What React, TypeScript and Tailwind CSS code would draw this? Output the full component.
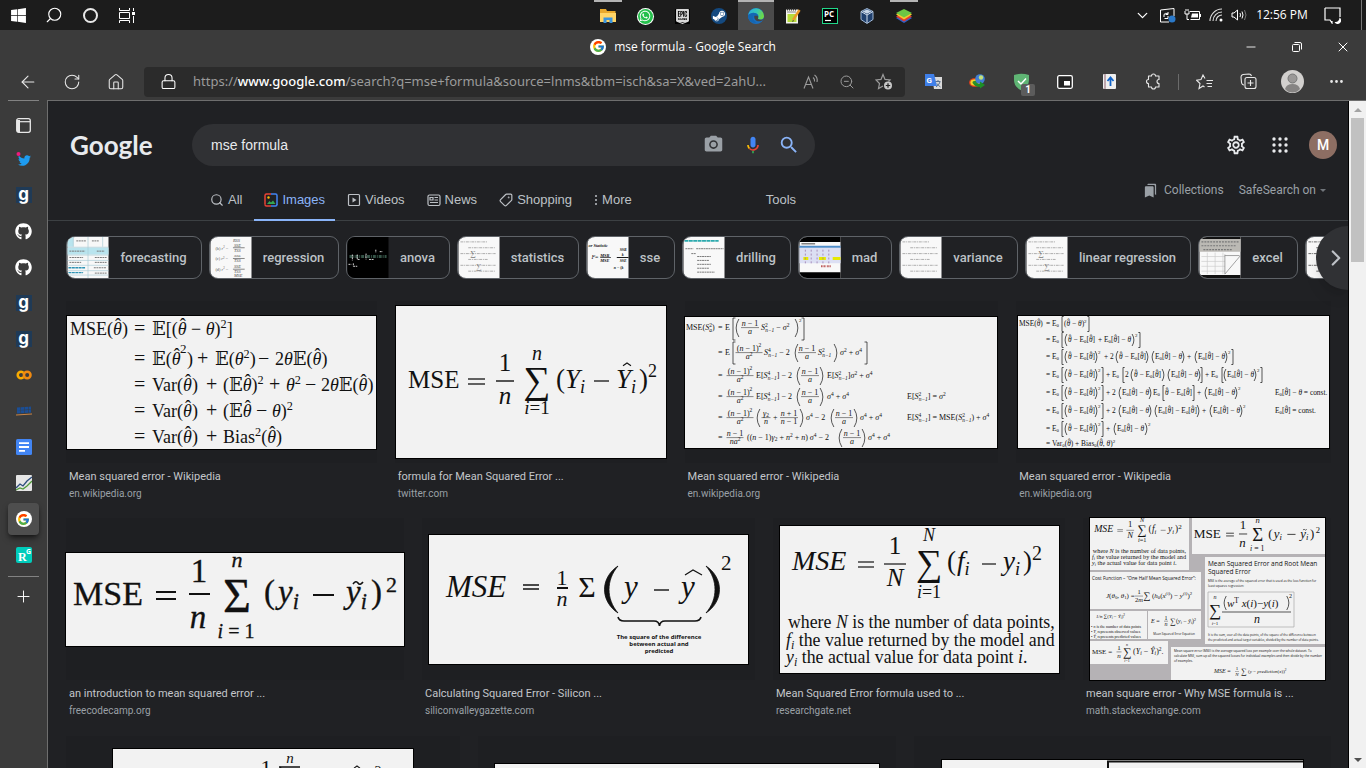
import React from "react";
import { ArrowLeft, RotateCw, House, Lock, ZoomOut, Plus, ChevronDown, ChevronRight, Search, Minus, X, Ellipsis, Tag } from "lucide-react";
import { FaWindows, FaWhatsapp, FaSteamSymbol, FaGithub, FaTwitter } from "react-icons/fa";
import { FcGoogle } from "react-icons/fc";
import { SiEpicgames } from "react-icons/si";
import { MdCameraAlt, MdOutlineSettings, MdSearch, MdBookmarks } from "react-icons/md";

/* ---------- formula drawing helpers ---------- */

const SERIF = '"Liberation Serif", "DejaVu Serif", serif';
const SANS = '"Open Sans", "Noto Sans", sans-serif';

type MathProps = { x: number; y: number; s: number; t: string; mid?: boolean; bold?: boolean; sans?: boolean; fill?: string };

/** Text with *italic*, ^{superscript}, _{subscript} and ~θ (theta with a hat) runs. */
function M({ x, y, s, t, mid, bold, sans, fill }: MathProps) {
  const parts = t.split(/(\*[^*]+\*|\^\{[^}]*\}|_\{[^}]*\}|~θ)/).filter(Boolean);
  let shift = 0;
  let advance = 0;
  return (
    <text x={x} y={y} fontSize={s} fill={fill ?? "#111"} textAnchor={mid ? "middle" : "start"} fontFamily={sans ? SANS : SERIF} fontWeight={bold ? 700 : 400} xmlSpace="preserve">
      {parts.map((p, i) => {
        const back = -shift;
        const dx = advance;
        shift = 0;
        advance = 0;
        if (p === "~θ") {
          shift = -s * 0.2;
          advance = s * 0.05;
          return (
            <React.Fragment key={i}>
              <tspan dx={dx} dy={back} fontStyle="italic">θ</tspan>
              <tspan dx={-s * 0.38} dy={shift}>ˆ</tspan>
            </React.Fragment>
          );
        }
        if (p[0] === "*") return <tspan key={i} dx={dx} dy={back} fontStyle="italic">{p.slice(1, -1)}</tspan>;
        if (p.startsWith("^{") || p.startsWith("_{")) {
          const stacked = p[0] === "_" && i > 0 && parts[i - 1].startsWith("^{");
          shift = p[0] === "^" ? -s * 0.4 : s * (stacked ? 0.3 : 0.18);
          return <tspan key={i} dx={stacked ? -s * 0.32 : dx} dy={back + shift} fontSize={s * 0.68} fontStyle={/[a-z]/.test(p) ? "italic" : "normal"}>{p.slice(2, -1)}</tspan>;
        }
        return <tspan key={i} dx={dx} dy={back}>{p}</tspan>;
      })}
    </text>
  );
}

function Frac({ x, y, s, n, d, w }: { x: number; y: number; s: number; n: string; d: string; w: number }) {
  const bar = y - s * 0.3;
  return (
    <>
      <M x={x} y={bar - s * 0.25} s={s} t={n} mid />
      <path d={`M${x - w / 2} ${bar}h${w}`} stroke="#111" strokeWidth={s * 0.06} />
      <M x={x} y={bar + s * 0.85} s={s} t={d} mid />
    </>
  );
}

function Bracket({ x, y, h, k }: { x: number; y: number; h: number; k: "(" | ")" | "[" | "]" }) {
  const w = k === "(" || k === "[" ? h * 0.16 : -h * 0.16;
  const t = y - h / 2;
  const d = k === "(" || k === ")"
    ? `M${x + w} ${t}Q${x - w * 0.9} ${y} ${x + w} ${t + h}`
    : `M${x + w * 0.7} ${t}H${x}v${h}h${w * 0.7}`;
  return <path d={d} fill="none" stroke="#111" strokeWidth={0.7} />;
}

function Rule({ x, y, w, t = 1 }: { x: number; y: number; w: number; t?: number }) {
  return <path d={`M${x} ${y}h${w}`} stroke="#111" strokeWidth={t} />;
}

function Hat({ x, y, w }: { x: number; y: number; w: number }) {
  return <path d={`M${x - w / 2} ${y + w * 0.35}L${x} ${y}L${x + w / 2} ${y + w * 0.35}`} fill="none" stroke="#111" strokeWidth={1.1} />;
}

/* ---------- result pictures ---------- */

function WikiBias() {
  const s = 18;
  return (
    <svg viewBox="0 0 309 133" className="w-[309px] max-w-full bg-[#f2f2f2] ring-1 ring-black" role="img" aria-label="Mean squared error decomposition">
      <M x={3} y={19} s={s} t="MSE(~θ)" />
      {[19, 49, 75, 101, 127].map((y) => <M key={y} x={67} y={y} s={20} t="=" />)}
      <M x={85} y={19} s={s} t="𝔼[(~θ − *θ*)^{2}]" />
      <M x={85} y={49} s={s} t="𝔼(~θ" /><M x={113} y={37} s={13} t="2" /><M x={120} y={49} s={s} t=")" />
      <M x={130} y={49} s={20} t="+" /><M x={148} y={49} s={s} t="𝔼(*θ*^{2})" /><M x={191} y={49} s={20} t="−" />
      <M x={208} y={49} s={s} t="2*θ*𝔼(~θ)" />
      {[75, 101, 127].map((y) => (
        <g key={y}><M x={85} y={y} s={s} t="Var(~θ)" /><M x={139} y={y} s={20} t="+" /></g>
      ))}
      <M x={156} y={75} s={s} t="(𝔼~θ)^{2}" /><M x={202} y={75} s={20} t="+" />
      <M x={219} y={75} s={s} t="*θ*^{2}" /><M x={238} y={75} s={20} t="−" /><M x={254} y={75} s={s} t="2*θ*𝔼(~θ)" />
      <M x={156} y={101} s={s} t="(𝔼~θ" /><M x={189} y={101} s={20} t="−" /><M x={205} y={101} s={s} t="*θ*)^{2}" />
      <M x={156} y={127} s={s} t="Bias^{2}(~θ)" />
    </svg>
  );
}

function TwitterFormula() {
  return (
    <svg viewBox="0 0 270 152" className="w-[270px] max-w-full bg-[#f2f2f2] ring-1 ring-black" role="img" aria-label="Formula for mean squared error">
      <M x={12} y={82} s={25} t="MSE" />
      <Rule x={72} y={73} w={17} t={1.3} /><Rule x={72} y={78} w={17} t={1.3} />
      <M x={109} y={65} s={25} t="1" mid /><Rule x={100} y={75} w={18} t={1.4} /><M x={109} y={98} s={25} t="*n*" mid />
      <M x={141} y={54} s={20} t="*n*" mid /><M x={141} y={87} s={38} t="∑" mid /><M x={141} y={108} s={19} t="*i*=1" mid />
      <M x={160} y={82} s={27} t="(*Y*_{i}" /><Rule x={198} y={75} w={15} t={1.3} />
      <M x={220} y={82} s={27} t="*Y*_{i}" /><Hat x={231} y={57} w={8} /><M x={243} y={82} s={27} t=")" /><M x={252} y={71} s={18} t="2" />
    </svg>
  );
}

const rowsVar = [13, 38, 61, 82, 103, 123];

function WikiVariance() {
  const s = 8;
  const nm = "*n* − 1";
  const tail = (x: number, y: number) => (
    <>
      <Bracket x={x} y={y - 2} h={18} k="(" /><Frac x={x + 13} y={y} s={s} n={nm} d="*a*" w={18} /><Bracket x={x + 26} y={y - 2} h={18} k=")" />
    </>
  );
  return (
    <svg viewBox="0 0 312 131" className="w-[312px] max-w-full bg-[#f2f2f2] ring-1 ring-black" role="img" aria-label="Mean squared error of the sample variance">
      <M x={1} y={13} s={s} t="MSE(*S*^{2}_{a})" />
      {rowsVar.map((y) => <M key={y} x={33} y={y} s={s} t="=" />)}
      <M x={40} y={13} s={s} t="E" /><Bracket x={48} y={12} h={22} k="[" /><Bracket x={51} y={11} h={18} k="(" />
      <Frac x={65} y={13} s={s} n={nm} d="*a*" w={18} /><M x={76} y={13} s={s} t="*S*^{2}_{n−1} − *σ*^{2}" />
      <Bracket x={113} y={11} h={18} k=")" /><M x={114} y={5} s={5} t="2" /><Bracket x={119} y={12} h={22} k="]" />
      <M x={40} y={38} s={s} t="E" /><Bracket x={48} y={36} h={22} k="[" /><Frac x={64} y={38} s={s} n="(*n* − 1)^{2}" d="*a*^{2}" w={27} />
      <M x={79} y={38} s={s} t="*S*^{4}_{n−1} − 2" /><Bracket x={110} y={36} h={18} k="(" /><Frac x={122} y={38} s={s} n={nm} d="*a*" w={18} />
      <M x={133} y={38} s={s} t="*S*^{2}_{n−1}" /><Bracket x={152} y={36} h={18} k=")" />
      <M x={155} y={38} s={s} t="*σ*^{2} + *σ*^{4}" /><Bracket x={182} y={36} h={22} k="]" />
      {[61, 82, 103].map((y) => <Frac key={y} x={55} y={y} s={s} n="(*n* − 1)^{2}" d="*a*^{2}" w={27} />)}
      {[61, 82].map((y) => (
        <g key={y}><M x={71} y={y} s={s} t="E[*S*^{4}_{n−1}] − 2" />{tail(112, y)}</g>
      ))}
      <M x={142} y={61} s={s} t="E[*S*^{2}_{n−1}]*σ*^{2} + *σ*^{4}" />
      <M x={142} y={82} s={s} t="*σ*^{4} + *σ*^{4}" />
      <M x={222} y={82} s={s} t="E[*S*^{2}_{n−1}] = *σ*^{2}" />
      <Bracket x={72} y={101} h={18} k="(" /><Frac x={81} y={103} s={s} n="*γ*_{2}" d="*n*" w={9} /><M x={88} y={103} s={s} t="+" />
      <Frac x={104} y={103} s={s} n="*n* + 1" d={nm} w={18} /><Bracket x={118} y={101} h={18} k=")" />
      <M x={121} y={103} s={s} t="*σ*^{4} − 2" />{tail(146, 103)}<M x={175} y={103} s={s} t="*σ*^{4} + *σ*^{4}" />
      <M x={222} y={103} s={s} t="E[*S*^{4}_{n−1}] = MSE(*S*^{2}_{n−1}) + *σ*^{4}" />
      <Frac x={50} y={123} s={s} n={nm} d="*na*^{2}" w={17} />
      <M x={62} y={123} s={s} t="((*n* − 1)*γ*_{2} + *n*^{2} + *n*) *σ*^{4} − 2" />{tail(154, 123)}<M x={183} y={123} s={s} t="*σ*^{4} + *σ*^{4}" />
    </svg>
  );
}

const E = "E_{θ}[~θ]";

function WikiProof() {
  const s = 7.4;
  const B = (x: number, y: number, k: "(" | ")" | "[" | "]") => <Bracket x={x} y={y - 2} h={k === "[" || k === "]" ? 15 : 12} k={k} />;
  return (
    <svg viewBox="0 0 311 132" className="w-[311px] max-w-full bg-[#f2f2f2] ring-1 ring-black" role="img" aria-label="Proof of the bias variance relationship">
      <M x={1} y={10} s={s} t="MSE(~θ)" />
      {[10, 26, 43, 61, 79, 97, 115, 130].map((y) => <M key={y} x={28} y={y} s={s} t="=" />)}
      {[10, 26, 43, 61, 79, 97, 115].map((y) => <g key={y}><M x={34} y={y} s={s} t="E_{θ}" />{B(44, y, "[")}</g>)}
      <M x={46} y={10} s={s} t="(~θ − *θ*)^{2}" />{B(71, 10, "]")}
      {[26, 43, 61, 79, 97, 115].map((y) => <g key={y}>{B(47, y, "(")}<M x={50} y={y} s={s} t={`~θ − ${E}`} /></g>)}
      <M x={80} y={26} s={s} t={`+ ${E} − *θ*`} />{B(116, 26, ")")}<M x={117} y={21} s={5} t="2" />{B(122, 26, "]")}
      {[43, 61, 79, 97, 115].map((y) => <g key={y}>{B(79, y, ")")}<M x={80} y={y - 5} s={5} t="2" /></g>)}
      {[61, 79, 97, 115].map((y) => <g key={y}>{B(85, y, "]")}</g>)}
      <M x={86} y={43} s={s} t="+ 2" />{B(98, 43, "(")}<M x={101} y={43} s={s} t={`~θ − ${E}`} />{B(130, 43, ")")}
      {B(134, 43, "(")}<M x={137} y={43} s={s} t={`${E} − *θ*`} />{B(166, 43, ")")}<M x={169} y={43} s={s} t="+" />
      {B(177, 43, "(")}<M x={180} y={43} s={s} t={`${E} − *θ*`} />{B(209, 43, ")")}<M x={210} y={38} s={5} t="2" />{B(215, 43, "]")}
      <M x={88} y={61} s={s} t="+ E_{θ}" />{B(105, 61, "[")}<M x={107} y={61} s={s} t="2" />{B(113, 61, "(")}<M x={116} y={61} s={s} t={`~θ − ${E}`} />{B(146, 61, ")")}
      {B(150, 61, "(")}<M x={153} y={61} s={s} t={`${E} − *θ*`} />{B(182, 61, ")")}{B(184, 61, "]")}<M x={187} y={61} s={s} t="+ E_{θ}" />
      {B(204, 61, "[")}{B(206, 61, "(")}<M x={209} y={61} s={s} t={`${E} − *θ*`} />{B(238, 61, ")")}<M x={239} y={56} s={5} t="2" />{B(244, 61, "]")}
      <M x={88} y={79} s={s} t="+ 2" />{B(101, 79, "(")}<M x={104} y={79} s={s} t={`${E} − *θ*`} />{B(133, 79, ")")}<M x={135} y={79} s={s} t="E_{θ}" />
      {B(145, 79, "[")}<M x={147} y={79} s={s} t={`~θ − ${E}`} />{B(176, 79, "]")}<M x={179} y={79} s={s} t="+" />{B(187, 79, "(")}<M x={190} y={79} s={s} t={`${E} − *θ*`} />{B(219, 79, ")")}<M x={220} y={74} s={5} t="2" />
      <M x={88} y={97} s={s} t="+ 2" />{B(101, 97, "(")}<M x={104} y={97} s={s} t={`${E} − *θ*`} />{B(133, 97, ")")}
      {B(137, 97, "(")}<M x={140} y={97} s={s} t={`${E} − ${E}`} />{B(181, 97, ")")}<M x={184} y={97} s={s} t="+" />{B(192, 97, "(")}<M x={195} y={97} s={s} t={`${E} − *θ*`} />{B(224, 97, ")")}<M x={225} y={92} s={5} t="2" />
      <M x={88} y={115} s={s} t="+" />{B(96, 115, "(")}<M x={99} y={115} s={s} t={`${E} − *θ*`} />{B(129, 115, ")")}<M x={130} y={110} s={5} t="2" />
      <M x={34} y={130} s={s} t="Var_{θ}(~θ) + Bias_{θ}(~θ, *θ*)^{2}" />
      <M x={257} y={79} s={s} t={`${E} − *θ* = const.`} />
      <M x={257} y={97} s={s} t={`${E} = const.`} />
    </svg>
  );
}

function MseTilde() {
  return (
    <>
      <M x={7} y={52} s={34} t="MSE" />
      <Rule x={90} y={39} w={20} t={2} /><Rule x={90} y={46} w={20} t={2} />
      <M x={133} y={29} s={33} t="1" mid /><Rule x={123} y={41} w={21} t={2} /><M x={132} y={75} s={33} t="*n*" mid />
      <M x={171} y={14} s={22} t="*n*" mid /><M x={171} y={59} s={48} t="Σ" mid /><M x={170} y={85} s={20} t="*i* = 1" mid />
      <M x={198} y={50} s={33} t="(" /><M x={212} y={50} s={33} t="*y*_{i}" /><Rule x={247} y={42} w={21} t={2} />
      <M x={280} y={50} s={33} t="*y*_{i}" />
      <path d="M287 31q3-4 5-1t5-1" fill="none" stroke="#111" strokeWidth="1.6" />
      <M x={305} y={50} s={33} t=")" /><M x={320} y={39} s={22} t="2" />
    </>
  );
}

function FreeCodeCamp() {
  return (
    <svg viewBox="0 0 338 93" className="w-[338px] max-w-full bg-[#f2f2f2] ring-1 ring-black" role="img" aria-label="MSE formula with y tilde">
      <g stroke="#111" strokeWidth={0.3}><MseTilde /></g>
    </svg>
  );
}

function SiliconValley() {
  return (
    <svg viewBox="0 0 319 129" className="w-[319px] max-w-full bg-[#f2f2f2] ring-1 ring-black" role="img" aria-label="Squared error explained">
      <M x={17} y={62} s={31} t="*MSE*" />
      <Rule x={94} y={50} w={16} t={1.5} /><Rule x={94} y={54} w={16} t={1.5} />
      <M x={133} y={50} s={22} t="1" mid /><Rule x={128} y={53} w={11} t={2} /><M x={133} y={71} s={22} t="*n*" mid />
      <M x={158} y={62} s={30} t="Σ" mid />
      <path d="M189 31C171 43 171 66 189 78C177 64 177 45 189 31ZM277 31C295 43 295 66 277 78C289 64 289 45 277 31Z" fill="#111" stroke="#111" strokeWidth="0.8" />
      <M x={195} y={62} s={31} t="*y*" /><Rule x={225} y={55} w={15} t={1.4} /><M x={252} y={62} s={31} t="*y*" />
      <path d="M256 40L264 35L273 40" fill="none" stroke="#111" strokeWidth="1.2" />
      <M x={292} y={35} s={21} t="2" />
      <path d="M189 82q1 4 6 4h30q5 0 5.500 5q.5-5 5.500-5h30q5 0 6-4" fill="none" stroke="#111" strokeWidth="1.600" />
      <M x={230} y={104} s={6} t="The square of the difference" mid bold sans />
      <M x={230} y={111} s={6} t="between actual and" mid bold sans />
      <M x={230} y={118} s={6} t="predicted" mid bold sans />
    </svg>
  );
}

function WhereN() {
  return (
    <>
      <M x={12} y={44} s={28} t="*MSE*" />
      <Rule x={78} y={36} w={16} t={1.2} /><Rule x={78} y={41} w={16} t={1.2} />
      <M x={115} y={28} s={25} t="1" mid /><Rule x={104} y={38} w={22} t={1.2} /><M x={115} y={60} s={25} t="*N*" mid />
      <M x={149} y={15} s={18} t="*N*" mid /><M x={149} y={49} s={37} t="∑" mid /><M x={149} y={72} s={18} t="*i*=1" mid />
      <M x={167} y={44} s={27} t="(" /><M x={177} y={44} s={27} t="*f*_{i}" /><Rule x={202} y={38} w={14} t={1.2} />
      <M x={223} y={44} s={27} t="*y*_{i}" /><M x={243} y={44} s={27} t=")" /><M x={252} y={34} s={20} t="2" />
      <M x={8} y={102} s={17.8} t="where *N* is the number of data points," />
      <M x={6} y={120} s={17.8} t="*f*_{i} the value returned by the model and" />
      <M x={6} y={137} s={17.8} t="*y*_{i} the actual value for data point *i*." />
    </>
  );
}

function ResearchGate() {
  return (
    <svg viewBox="0 0 279 147" className="w-[279px] max-w-full bg-[#f2f2f2] ring-1 ring-black" role="img" aria-label="MSE formula with explanation">
      <WhereN />
    </svg>
  );
}

function StackExchange() {
  return (
    <svg viewBox="0 0 235 162" className="w-[235px] max-w-full bg-[#b5b2b5] ring-1 ring-black" role="img" aria-label="Collage of MSE formulas">
      <g fill="#f2f2f2">
        <path d="M0 0h99v52H0zM102 0h133v36H102zM115 39h120v87H115zM0 54h111v37H0zM0 93h57v28H0zM58 93h53v28H58zM0 123h78v23H0zM81 129h154v33H81z" />
      </g>
      <g transform="translate(0 -1) scale(0.35)"><WhereN /></g>
      <g transform="translate(101 0) scale(0.39)"><MseTilde /></g>
      <M x={118} y={48} s={6.5} t="Mean Squared Error and Root Mean" sans />
      <M x={118} y={56} s={6.5} t="Squared Error" sans />
      <M x={118} y={64} s={3.1} t="MSE is the average of the squared error that is used as the loss function for" sans />
      <M x={118} y={69} s={3.1} t="least squares regression:" sans />
      <path d="M118 74h86v35h-86z" fill="none" stroke="#aaa" strokeWidth="0.7" />
      <M x={125} y={81} s={6} t="*n*" mid /><M x={125} y={98} s={17} t="∑" mid /><M x={125} y={107} s={5} t="*i*=1" mid />
      <Bracket x={134} y={85} h={14} k="(" /><M x={137} y={89} s={11} t="*w*^{T} *x*(*i*)−*y*(*i*)" /><Bracket x={199} y={85} h={14} k=")" /><M x={199} y={80} s={6} t="2" />
      <Rule x={132} y={94} w={69} t={0.7} /><M x={167} y={105} s={12} t="*n*" mid />
      <M x={118} y={118} s={3} t="It is the sum, over all the data points, of the square of the difference between" sans />
      <M x={118} y={123} s={3} t="the predicted and actual target variables, divided by the number of data points." sans />
      <M x={2} y={62} s={4.7} t="Cost Function – “One Half Mean Squared Error”:" sans />
      <M x={16} y={80} s={7} t="*J*(*θ*_{0}, *θ*_{1}) =" /><Frac x={49} y={80} s={6.5} n="1" d="2*m*" w={8} /><M x={57} y={81} s={10} t="∑" mid />
      <M x={62} y={80} s={7} t="(*h*_{θ}(*x*^{(i)}) − *y*^{(i)})^{2}" />
      <M x={6} y={100} s={5} t="*1/n* ∑(*Y*_{i} − *Ŷ*_{i})^{2}" />
      <M x={1} y={110} s={4} t="• *n* is the number of data points" /><M x={1} y={115} s={4} t="• *Y*_{i} represents observed values" /><M x={1} y={120} s={4} t="• *Ŷ*_{i} represents predicted values" />
      <M x={61} y={105} s={6} t="*E* =" /><Frac x={76} y={105} s={6} n="1" d="*n*" w={4} /><M x={80} y={106} s={8} t="∑" /><M x={86} y={105} s={6} t="(*y*_{i} − *ŷ*_{i})^{2}" />
      <M x={84} y={117} s={3} t="Mean Squared Error Equation" mid sans />
      <M x={2} y={136} s={7} t="MSE =" /><Frac x={29} y={136} s={7} n="1" d="*n*" w={5} /><M x={37} y={138} s={12} t="∑" mid /><M x={37} y={128} s={4} t="*n*" mid /><M x={37} y={144} s={4} t="*i*=1" mid /><M x={43} y={136} s={8} t="(*Y*_{i} − *Ŷ*_{i})^{2}." />
      <M x={84} y={134} s={3.2} t="Mean square error (MSE) is the average squared loss per example over the whole dataset. To" sans />
      <M x={84} y={139} s={3.2} t="calculate MSE, sum up all the squared losses for individual examples and then divide by the number" sans />
      <M x={84} y={144} s={3.2} t="of examples." sans />
      <M x={124} y={155} s={6} t="*MSE* =" /><Frac x={147} y={155} s={5} n="1" d="*N*" w={4} /><M x={151} y={156} s={8} t="∑" /><M x={158} y={155} s={5} t="(*y* − *prediction*(*x*))^{2}" />
    </svg>
  );
}

function NextA() {
  return (
    <svg viewBox="0 0 300 120" className="w-[300px] max-w-full bg-[#f2f2f2] ring-1 ring-black" role="img" aria-label="MSE formula">
      <M x={177} y={14} s={15} t="*n*" mid /><M x={153} y={26} s={22} t="1" mid /><Rule x={166} y={18} w={21} t={1.5} /><Hat x={244} y={17} w={6} /><M x={265} y={27} s={14} t="2" mid />
      <path d="M167 18l9 12-9 12h20" fill="none" stroke="#111" strokeWidth="1.5" /><Rule x={145} y={32} w={16} />
    </svg>
  );
}
function NextB() {
  return <svg viewBox="0 0 384 100" className="w-[384px] max-w-full bg-[#f2f2f2] ring-1 ring-black" role="img" aria-label="Mean squared error diagram" />;
}
function NextC() {
  return (
    <svg viewBox="0 0 361 110" className="w-[361px] max-w-full bg-[#f2f2f2] ring-1 ring-black" role="img" aria-label="Error comparison">
      <path d="M166 40V1.500H361" fill="none" stroke="#111" strokeWidth="2" />
    </svg>
  );
}

type Result = { title: string; site: string; grow: string; pic: React.ReactNode };
const rowOne: Result[] = [
  { title: "Mean squared error - Wikipedia", site: "en.wikipedia.org", grow: "grow-[311]", pic: <WikiBias /> },
  { title: "formula for Mean Squared Error ...", site: "twitter.com", grow: "grow-[272]", pic: <TwitterFormula /> },
  { title: "Mean squared error - Wikipedia", site: "en.wikipedia.org", grow: "grow-[314]", pic: <WikiVariance /> },
  { title: "Mean squared error - Wikipedia", site: "en.wikipedia.org", grow: "grow-[315]", pic: <WikiProof /> },
];
const rowTwo: Result[] = [
  { title: "an introduction to mean squared error ...", site: "freecodecamp.org", grow: "grow-[338]", pic: <FreeCodeCamp /> },
  { title: "Calculating Squared Error - Silicon ...", site: "siliconvalleygazette.com", grow: "grow-[333]", pic: <SiliconValley /> },
  { title: "Mean Squared Error formula used to ...", site: "researchgate.net", grow: "grow-[292]", pic: <ResearchGate /> },
  { title: "mean square error - Why MSE formula is ...", site: "math.stackexchange.com", grow: "grow-[248]", pic: <StackExchange /> },
];

function ResultRow({ items }: { items: Result[] }) {
  return (
    <div className="flex h-[217px] gap-[18px]">
      {items.map((r, i) => (
        <a key={i} href="#result" className={`flex min-w-0 basis-0 flex-col ${r.grow}`}>
          <span className="flex h-[162px] items-center justify-center bg-[#1e1f22]">{r.pic}</span>
          <span className="mt-1.5 truncate pl-[3px] text-[11px] leading-4 text-[#c3c6ca]">{r.title}</span>
          <span className="truncate pl-[3px] text-[10px] leading-[17px] text-[#9aa0a6]">{r.site}</span>
        </a>
      ))}
    </div>
  );
}

/* ---------- related-search chips ---------- */

function Thumb({ kind }: { kind: string }) {
  const lines = [5, 11, 17, 23, 29, 35];
  return (
    <svg viewBox="0 0 42 42" className="h-full w-[42px] flex-none" aria-hidden="true">
      <rect width="42" height="42" fill={kind === "anova" ? "#000" : "#f8f8f8"} />
      {kind === "forecasting" && (
        <g>
          <path d="M0 0h6v10H0zM0 11h42v7H0z" fill="#b9e4ee" />
          <path d="M0 10.500h42M0 18.500h42M0 24h42M0 29h42M0 34.500h42M0 39h42M6 0v10M21 0v42M36 0v10" stroke="#a9ccd6" strokeWidth=".7" />
          <path d="M9 4h10M25 4h7M2 14.500h16M30 14.500h8M2 21h14M28 21h12M2 26h12M28 26h12M27 31.500h13M28 37h12" stroke="#777" strokeWidth="1" strokeDasharray="2 .6" />
          <path d="M1 31.500h17M1 36.500h15" stroke="#2d93b5" strokeWidth="1.500" strokeDasharray="3 .5" />
        </g>
      )}
      {kind === "regression" && (
        <g>
          <M x={23} y={5} s={4.5} t="*RSS*" fill="#444" />
          {["b", "c", "d"].map((k, i) => (
            <g key={k}>
              <M x={5} y={13 + i * 11} s={4.5} t={`(${k}) *r*^{2} =`} fill="#555" />
              <M x={24} y={10 + i * 11} s={4.5} t="*SSE*" fill="#444" /><Rule x={23} y={11 + i * 11} w={12} t={0.5} /><M x={24} y={15 + i * 11} s={4.5} t="*TSS*" fill="#444" />
            </g>
          ))}
          <M x={24} y={41} s={4.5} t="*MSE*" fill="#444" />
        </g>
      )}
      {kind === "anova" && (
        <g fill="none" strokeWidth="1.500">
          <path d="M2 20h38" stroke="#355347" strokeDasharray="3 1 1 1" strokeWidth="3" />
          <path d="M5 18v6M10 18v5h3M19 17v6M22 23h5M29 13v3M33 15h3M1 28h3M6 27v3h4" stroke="#d5d5d5" strokeDasharray="2 .7" strokeWidth="1" />
        </g>
      )}
      {kind === "sse" && (
        <g><M x={1} y={10} s={4.5} t="*or Statistic*" bold /><M x={4} y={23} s={6} t="*F*=" /><M x={13} y={20} s={4.5} t="*MSR*" bold /><Rule x={13} y={21} w={11} t={0.7} /><M x={13} y={26} s={4.5} t="*MSE*" bold /><M x={33} y={14} s={4} t="*SSR*" bold /><Rule x={30} y={21} w={12} t={1} /><M x={35} y={19} s={4} t="*k*" bold /><M x={33} y={26} s={4} t="*SSE*" bold /><M x={27} y={33} s={4} t="*n* − (*k*" bold /></g>
      )}
      {kind === "drilling" && (
        <g><path d="M1 4h35" stroke="#2ba9ad" strokeWidth="1.600" strokeDasharray="4 .5" /><path d="M2 12h8M13 12h28M8 17h5M14 20h14M14 24h12M14 28h14M14 32h12M14 36h18" stroke="#777" strokeWidth="1" strokeDasharray="2 .5" /></g>
      )}
      {kind === "mad" && (
        <g><path d="M0 0h42v5H0zM0 36h42v6H0z" fill="#000" /><path d="M0 11h42v16H0z" fill="#dcdff3" /><path d="M0 10h42" stroke="#4f8dc9" strokeWidth="2" /><path d="M4 22h5M20 22h7M34 22h8" stroke="#e6e900" strokeWidth="3" /><path d="M6 13v14M12 13v14M18 13v14M24 13v14M30 13v14" stroke="#97a" strokeWidth=".8" strokeDasharray="2 2" /><path d="M2 7h14" stroke="#444" /><path d="M22 30h5M28 30h4" stroke="#b55" strokeWidth="2" strokeDasharray="1 .5" /></g>
      )}
      {kind === "excel" && (
        <g><path d="M0 0h42v15H0z" fill="#bbb9b4" /><path d="M0 0h42v2H0zM0 39h42v3H0z" fill="#111" /><path d="M2 5h38M2 9h36M4 13h30" stroke="#777" strokeWidth="1.200" strokeDasharray="2 1" /><path d="M2 20h24M2 25h24M2 30h24M2 35h24M8 16v22M16 16v22M24 16v22" stroke="#ccc" strokeWidth=".7" /><path d="M26 38L42 19M26 19h15M26 18v20" stroke="#888" strokeWidth=".8" fill="none" /></g>
      )}
      {(kind === "statistics" || kind === "variance" || kind === "linear regression" || kind === "next") && (
        <g stroke={kind === "next" ? "#555" : "#a3a3a3"} strokeWidth=".9">
          {lines.map((y, i) => <path key={y} d={`M${i % 2 ? 10 : 2} ${y}H${i % 3 ? 38 : 30}`} strokeDasharray="3 .8 1 .8" />)}
          {kind !== "variance" && <g stroke="none"><M x={12} y={19} s={8} t="∑" fill="#777" /><M x={18} y={33} s={8} t="∑" fill="#888" /></g>}
        </g>
      )}
    </svg>
  );
}

const chips = [
  ["forecasting", "w-[136px]"], ["regression", "w-[130px]"], ["anova", "w-[104px]"], ["statistics", "w-[122px]"], ["sse", "w-[89px]"],
  ["drilling", "w-[109px]"], ["mad", "w-[94px]"], ["variance", "w-[119px]"], ["linear regression", "w-[166px]"], ["excel", "w-[100px]"],
];

/* ---------- icons ---------- */

function Folder() {
  return <svg viewBox="0 0 16 16" className="size-4"><path d="M0 1h6l1 2h8.500v11H0z" fill="#e8a92d" /><path d="M0 5h16v9H0z" fill="#ffd567" /><path d="M3.500 15V9.500h9V15h-3v-3h-3v3z" fill="#3a94dd" /></svg>;
}
function Edge() {
  return (
    <svg viewBox="0 0 16 16" className="size-4">
      <defs><linearGradient id="eg" x1="0" x2="1" y1="0" y2="0.300"><stop offset="0" stopColor="#2aa9e0" /><stop offset=".6" stopColor="#36c6b4" /><stop offset="1" stopColor="#6bd84c" /></linearGradient></defs>
      <circle cx="8" cy="8" r="8" fill="#1a6fc0" />
      <path d="M.1 7A8 8 0 0 1 16 8c0 2.500-2 3.800-4 3.600-1.500-.1-2.400-.8-1.900-1.600C11.500 7 9 5 6.500 5 3.500 5 1 6 .1 7z" fill="url(#eg)" />
      <path d="M6 6.500c-2 2-1.500 6 2.500 8.200-5 .8-8.500-3-8.400-7C1.500 5.500 4.500 4.500 6.500 5 9 5.200 10.800 7.500 10 10c-.6 1 .5 2 2 2-3 1-6-.5-6.500-3 0-.9.1-1.700.5-2.500z" fill="#1466b3" />
      <path d="M6.300 8c1 0 3-.5 3.600.2.400.6.300 1.200.1 1.800-.5.900 1 1.900 3 1.700 1-.1 1.800-.4 2.300-.8-.7 1.600-2.200 2.400-4.200 2.400C8 13.300 6 11 6.300 8z" fill="#444" />
    </svg>
  );
}
function NotepadPlus() {
  return <svg viewBox="0 0 16 16" className="size-4"><path d="M1 1.500h12v14H1z" fill="#f4f4ee" /><path d="M2.500 6h9v8h-9z" fill="#b7dc3b" /><path d="M2 4h9" stroke="#888" /><path d="M2 1.500h10" stroke="#333" strokeWidth="2" strokeDasharray="1 1" /><path d="M14.500 2L8 12" stroke="#eb9b28" strokeWidth="2.500" /><path d="M8 12l-1 2 2-1" fill="#333" /></svg>;
}
function PyCharm() {
  return <svg viewBox="0 0 16 16" className="size-4"><rect x=".5" y=".5" width="15" height="15" fill="#000" stroke="#21d789" /><text x="2" y="9" fontSize="8" fontWeight="700" fill="#fff" fontFamily={SANS}>PC</text><path d="M3 12.500h6" stroke="#fff" strokeWidth="1.200" /></svg>;
}
function Cube() {
  return <svg viewBox="0 0 16 16" className="size-4"><path d="M8 .5l6 3v8l-6 4-6-4v-8z" fill="#20406e" stroke="#9fb8d6" /><path d="M2 3.500l6 3.500 6-3.500M8 7v8" stroke="#d4e0ee" fill="none" /><path d="M8 1.500l4.500 2L8 5.800 3.500 3.500z" fill="#c8d6e8" /></svg>;
}
function Stacks() {
  return <svg viewBox="0 0 18 16" className="h-4 w-[18px]"><path d="M1 10l8 5 8-5-8-4z" fill="#2f62c9" /><path d="M1 8.500l8 5 8-5-8-4z" fill="#e33b2e" /><path d="M1 6.500l8 5 8-5-8-4z" fill="#f5c82c" /><path d="M1 5l8 4.500L17 5 9 1z" fill="#6cc644" /></svg>;
}
function Mic() {
  return <svg viewBox="0 0 24 24" className="size-5"><path fill="#4285f4" d="M12 15c1.700 0 3-1.300 3-3V5c0-1.700-1.300-3-3-3S9 3.300 9 5v7c0 1.700 1.300 3 3 3z" /><path fill="#34a853" d="M11 18.900h2V22h-2z" /><path fill="#fbbc04" d="M7 12H5c0 1.900.8 3.700 2.100 4.900l1.400-1.400C7.600 14.600 7 13.400 7 12z" /><path fill="#ea4335" d="M12 17c-1.400 0-2.600-.6-3.500-1.500l-1.400 1.400A7 7 0 0 0 12 19c3.900 0 7-3.200 7-7h-2c0 2.800-2.200 5-5 5z" /></svg>;
}
function Goodreads() {
  return <span className="flex size-4 items-center justify-center bg-[#1f3a56] pb-0.5 font-['Inter'] text-[17px] leading-none font-bold text-white">g</span>;
}
function ImagesIcon() {
  return <svg viewBox="0 0 14 14" className="size-[14px]" fill="none" strokeWidth="1.500"><path d="M7 1H2.500A1.500 1.500 0 0 0 1 2.500v9" stroke="#ea4335" /><path d="M7 1h4.500A1.500 1.500 0 0 1 13 2.500V12" stroke="#4285f4" /><path d="M1 11.500A1.500 1.500 0 0 0 2.500 13H7" stroke="#ea4335" /><path d="M7 13h4.500a1.500 1.500 0 0 0 1.500-1.500" stroke="#4285f4" /><circle cx="4.500" cy="4.500" r="1.200" fill="#fbbc04" /><path d="M3 11l2.500-3 1.500 1.500L9 7.500l2.500 3.500z" fill="#34a853" /></svg>;
}
function VideoIcon() {
  return <svg viewBox="0 0 14 14" className="size-[14px]" fill="none" stroke="currentColor" strokeWidth="1.200"><rect x="1.500" y="1.500" width="11" height="11" rx="1" /><path d="M5.500 4.500v5l4-2.500z" fill="currentColor" stroke="none" /></svg>;
}
function NewsIcon() {
  return <svg viewBox="0 0 14 14" className="size-[14px]" fill="none" stroke="currentColor" strokeWidth="1.200"><rect x="1" y="2" width="12" height="10.500" rx="1.500" /><path d="M3 4.500h3v2.500H3zM7.500 4.500H11M7.500 7H11M3 9.500h8" /></svg>;
}
function Dots() {
  return <svg viewBox="0 0 4 14" className="h-[14px] w-1" fill="currentColor"><circle cx="2" cy="3" r="1" /><circle cx="2" cy="7" r="1" /><circle cx="2" cy="11" r="1" /></svg>;
}

const sideIcons: [string, React.ReactNode][] = [
  ["Twitter", <svg viewBox="0 0 16 16" className="size-4"><g transform="translate(2 3)"><FaTwitter size={13} color="#1d9bf0" /></g><circle cx="2.500" cy="3" r="2" fill="#f0197d" /></svg>],
  ["Goodreads", <Goodreads />],
  ["GitHub", <FaGithub size={17} color="#fff" />],
  ["GitHub repository", <FaGithub size={17} color="#fff" />],
  ["Goodreads list", <Goodreads />],
  ["Goodreads quotes", <Goodreads />],
  ["Colab", <svg viewBox="0 0 16 16" className="size-4" fill="none" strokeWidth="2.600"><path d="M7.500 5.800a3.300 3.300 0 1 0 0 4.400" stroke="#f9ab00" /><circle cx="11.200" cy="8" r="3.300" stroke="#f08a10" /></svg>],
  ["Forum", <svg viewBox="0 0 16 16" className="size-4"><path d="M1 6l14-1M1 9l14-.8" stroke="#1b4e95" strokeWidth="2.800" strokeDasharray="3.500 .5" /><path d="M0 12l16-1" stroke="#c98445" /></svg>],
  ["Docs", <svg viewBox="0 0 16 16" className="size-4"><rect width="16" height="16" rx="1.500" fill="#4285f4" /><path d="M3 4.200h10M3 8h10M3 11.800h6" stroke="#fff" strokeWidth="1.800" /></svg>],
  ["Charts", <svg viewBox="0 0 16 16" className="size-4"><rect width="16" height="16" rx="1" fill="#e6e6e6" /><path d="M0 13l4-4 3 2 4-5 5-4" stroke="#2c4c7c" strokeWidth="1.300" fill="none" /><path d="M0 15l4-2 3 1 4-3 5-5" stroke="#4f9a3a" strokeWidth="1.300" fill="none" /></svg>],
];

const svgLine = { fill: "none", stroke: "#e8e8e8", strokeWidth: 1.1 } as const;

function IconCell({ label, children }: { label: string; children: React.ReactNode }) {
  return <button aria-label={label} className="relative flex h-9 w-11 flex-none items-center justify-center text-[#e8e8e8]">{children}</button>;
}

export default function App() {
  const apps: [string, React.ReactNode, boolean][] = [
    ["File Explorer", <Folder />, true],
    ["WhatsApp", <span className="flex size-[15px] items-center justify-center rounded-full bg-[#25c04c] text-white ring-1 ring-white"><FaWhatsapp size={12} /></span>, false],
    ["Epic Games", <SiEpicgames size={15} color="#d8d8d8" className="bg-black" />, false],
    ["Steam", <span className="flex size-4 items-center justify-center rounded-full bg-[#14497f] text-white"><FaSteamSymbol size={14} /></span>, false],
    ["Edge", <Edge />, true],
    ["Notepad++", <NotepadPlus />, false],
    ["PyCharm", <PyCharm />, false],
    ["VirtualBox", <Cube />, false],
    ["BlueStacks", <Stacks />, true],
  ];
  return (
    <div className="flex h-screen flex-col overflow-hidden bg-[#3b3b3b] font-['Roboto','Liberation_Sans',sans-serif] text-white">
      {/* Taskbar */}
      <header className="flex h-[30px] flex-none items-center bg-[#1c1c1c]">
        <button aria-label="Start" className="flex w-9 justify-center"><FaWindows size={17} /></button>
        <button aria-label="Search" className="flex w-9 justify-center"><Search size={18} strokeWidth={1.5} className="-scale-x-100" /></button>
        <button aria-label="Cortana" className="flex w-9 justify-center"><span className="size-[15px] rounded-full border-2 border-[#e8e8e8]" /></button>
        <button aria-label="Task view" className="flex w-9 justify-center"><svg viewBox="0 0 17 17" className="size-[17px]" fill="none" stroke="#fff" strokeWidth="1"><path d="M1.500 1v2.500h10V1M1.500 16v-2.500h10V16M1.500 5.500h10v6h-10zM15.500 1v3M15.500 9v7" /><path d="M14 5h3v3h-3z" fill="#fff" stroke="none" /></svg></button>
        <span className="grow-[446] basis-0" />
        <nav aria-label="Running apps" className="flex h-full gap-px">
          {apps.map(([name, icon, open]) => (
            <button key={name} aria-label={name} className={`flex w-9 flex-col items-center ${name === "Edge" ? "bg-[#4b4b4b]" : ""}`}>
              <span className={`h-0.5 ${name === "Edge" ? "w-full" : "w-7"} ${open ? "bg-[#b4b4b4]" : ""}`} />
              <span className="flex flex-1 items-center">{icon}</span>
            </button>
          ))}
        </nav>
        <span className="grow-[212] basis-0" />
        <div className="flex items-center gap-2 pr-1">
          <ChevronDown size={17} strokeWidth={1.8} />
          <svg viewBox="0 0 17 16" className="h-4 w-[17px]" fill="none" stroke="#fff"><path d="M10 15H1.500V3l13.500-1.500V9M5 10V8c0-2 3-2 4-1M9 5v2.500H6.500M5.500 11.500H9V9" /><circle cx="13" cy="12" r="3.500" fill="#2b79c9" stroke="none" /></svg>
          <svg viewBox="0 0 17 12" className="h-3 w-[17px]" fill="none" stroke="#fff"><path d="M6 2.500h9.500v8h-9M16.500 5v3M1 2v3h4V2M2 0v2M4 0v2M3 5v5.500h2" /><path d="M8 4.500h6v4H7z" fill="#fff" stroke="none" /></svg>
          <svg viewBox="0 0 14 14" className="size-[14px]" fill="none" stroke="#ddd" strokeWidth="1.100"><path d="M1 13A12 12 0 0 1 13 1M4 13a9 9 0 0 1 9-9M7 13a6 6 0 0 1 6-6" /><circle cx="12" cy="12" r="1.500" fill="#fff" stroke="none" /></svg>
          <svg viewBox="0 0 17 14" className="h-[14px] w-[17px]" fill="none" stroke="#fff"><path d="M1 5h2l3.500-3v10L3 9H1zM9 5q1 2 0 4M11 3.500q2 3.500 0 7" /><path d="M13.500 2q3 5 0 10" stroke="#777" /></svg>
          <time className="w-[52px] text-center font-['Open_Sans'] text-[12px] whitespace-nowrap">12:56 PM</time>
          <button aria-label="Notifications" className="ml-2 flex"><svg viewBox="0 0 17 17" className="size-[17px]" fill="none" stroke="#fff" strokeWidth="1.200"><path d="M1 1h15v9M1 1v12h5l2 3v-2" /><path d="M15.500 10.500a3.500 3.500 0 1 1-5 4.500c3 .5 5-1.500 5-4.500z" fill="#fff" stroke="none" /></svg></button>
          <span className="ml-3 h-[30px] w-px bg-[#777]" />
        </div>
      </header>

      {/* Window title */}
      <div className="grid h-[33px] flex-none grid-cols-[1fr_auto_1fr] items-center">
        <span />
        <h1 className="flex items-center gap-2 font-['Open_Sans'] text-[12px] font-normal">
          <span className="flex size-4 items-center justify-center rounded-full bg-white"><FcGoogle size={13} /></span>
          mse formula - Google Search
        </h1>
        <div className="flex items-center justify-end">
          <button aria-label="Minimize" className="flex w-[46px] justify-center"><Minus size={14} strokeWidth={1.5} /></button>
          <button aria-label="Restore" className="flex w-[46px] justify-center"><svg viewBox="0 0 10 10" className="size-2.5" fill="none" stroke="#fff"><rect x=".5" y="2.500" width="7" height="7" rx="1" /><path d="M2.500.5H8A1.500 1.500 0 0 1 9.500 2v5.500" /></svg></button>
          <button aria-label="Close" className="flex w-[46px] justify-center"><X size={16} strokeWidth={1.500} /></button>
        </div>
      </div>

      {/* Browser toolbar */}
      <div className="flex h-[37px] flex-none items-center pr-2 pl-1.5">
        <IconCell label="Back"><ArrowLeft size={20} strokeWidth={1.3} /></IconCell>
        <IconCell label="Refresh"><RotateCw size={18} strokeWidth={1.4} /></IconCell>
        <IconCell label="Home"><House size={18} strokeWidth={1.4} /></IconCell>
        <div className="mx-1.5 flex h-[30px] min-w-0 flex-1 items-center rounded bg-[#2b2b2b]">
          <Lock size={17} strokeWidth={1.500} className="mx-4 flex-none" />
          <div role="textbox" aria-label="Address and search bar" contentEditable suppressContentEditableWarning className="min-w-0 flex-1 truncate font-['Noto_Sans'] text-[13px] text-[#9b9b9b] outline-none">
            https://<span className="font-medium text-white">www.google.com</span>/search?q=mse+formula&amp;source=lnms&amp;tbm=isch&amp;sa=X&amp;ved=2ahU...
          </div>
          <div className="flex items-center gap-5 pr-3 text-[#9b9b9b]">
            <button aria-label="Read aloud"><svg viewBox="0 0 16 16" className="size-4" fill="none" stroke="currentColor" strokeWidth="1.100"><path d="M1 14.500L5.500 3 10 14.500M2.500 10.500h6M10 3.500q2 1.500 1.500 4M11.500 1q3.500 2.500 2.500 7" /></svg></button>
            <button aria-label="Zoom out"><ZoomOut size={16} strokeWidth={1.500} /></button>
            <button aria-label="Add to favorites"><svg viewBox="0 0 18 17" className="h-[17px] w-[18px]" fill="none" stroke="currentColor" strokeWidth="1.200"><path d="M8 13l-4.500 2.500 1-5L1 7l5-.6L8 1.500l2 4.900 5 .6-1.500 1.500" /><circle cx="13" cy="12.500" r="4" fill="#c8c8c8" stroke="none" /><path d="M13 10.300v4.400M10.800 12.500h4.400" stroke="#222" /></svg></button>
          </div>
        </div>
        <IconCell label="Translate"><svg viewBox="0 0 17 17" className="size-[17px]"><path d="M7 4h10v12H9z" fill="#dadada" /><path d="M0 1h9l3 12H0z" fill="#3f7fe8" /><text x="1.500" y="9.500" fontSize="8" fontWeight="700" fill="#fff" fontFamily="Roboto">G</text><path d="M10.500 8.500h5M13 7v1.500M15 9q-1 3-4 5M12 10.500q1 2 3.500 3.500" stroke="#58708f" fill="none" /></svg></IconCell>
        <IconCell label="Download manager"><svg viewBox="0 0 17 15" className="h-[15px] w-[17px]"><ellipse cx="6" cy="8.500" rx="6" ry="4.500" fill="#d63d1e" /><ellipse cx="6" cy="8.500" rx="4.600" ry="3.200" fill="#f6d12c" /><ellipse cx="6.500" cy="8.500" rx="3" ry="1.800" fill="#2f8f2a" /><circle cx="11" cy="5" r="4.800" fill="#3f7ed6" /><circle cx="12" cy="3.500" r="2.200" fill="#c3e07a" /><path d="M4 9.500l7 .5V7.500l5 3.500-5 3.500V13q-5 0-7-3.500z" fill="#1d8f27" /></svg></IconCell>
        <IconCell label="Ad blocker"><svg viewBox="0 0 17 18" className="h-[18px] w-[17px]"><path d="M1 2q7-2.500 15 0v5q0 7-7.500 10.500Q1 14 1 7z" fill="#5fb574" /><path d="M5 8l3 3 5-5.500" stroke="#fff" strokeWidth="1.500" fill="none" /></svg><span className="absolute right-2 bottom-1 rounded-xs bg-[#5c5c5c] px-1 text-[10px] leading-[12px] font-bold text-white">1</span></IconCell>
        <IconCell label="Picture in picture"><svg viewBox="0 0 16 14" className="h-[14px] w-4"><rect x=".7" y=".7" width="14.600" height="12.600" rx="1.500" fill="#222" stroke="#fff" strokeWidth="1.300" /><path d="M7 6h6v4.500H7z" fill="#fff" /></svg></IconCell>
        <IconCell label="Upload extension"><svg viewBox="0 0 13 15" className="h-[15px] w-[13px]"><rect width="13" height="15" rx="1" fill="#efefef" /><path d="M2 0v15" stroke="#ad8f98" strokeWidth="1.500" /><path d="M7.500 12V4M4.500 7l3-3.500 3 3.500" stroke="#1264c8" strokeWidth="1.800" fill="none" /></svg></IconCell>
        <IconCell label="Extensions"><svg viewBox="0 0 16 17" className="h-[17px] w-4" {...svgLine}><path d="M3.500 3h3a2 2 0 0 1 4 0H14v3.500a1.500 1.500 0 0 0 0 4V14h-3.500a2 2 0 0 1-4 0h-3v-3.500a2 2 0 1 1 0-4z" strokeLinejoin="round" /></svg></IconCell>
        <span className="mx-[3px] h-4 w-px flex-none bg-[#6b6b6b]" />
        <IconCell label="Favorites"><svg viewBox="0 0 17 16" className="h-4 w-[17px]" {...svgLine}><path d="M9 4.500L7 1 5 5.500l-4.500.7L4 9.500 3 14.500l4-2.500 1.500 1M10.500 6.500H17M10.500 9.500H16M11.500 12.500H16" /></svg></IconCell>
        <IconCell label="Collections"><svg viewBox="0 0 17 17" className="size-[17px]" {...svgLine}><path d="M4 12Q2 12 1.500 9.500L1 4q0-2 2-2.500L9 1q2 0 2.500 2" /><rect x="5" y="4.500" width="11" height="11" rx="2" /><path d="M10.500 7v6M7.500 10h6" /></svg></IconCell>
        <IconCell label="Profile"><svg viewBox="0 0 23 23" className="size-[23px]"><circle cx="11.500" cy="11.500" r="11.500" fill="#d2d0ce" /><circle cx="11.500" cy="8.500" r="4.500" fill="#9a9897" stroke="#777" /><path d="M4 19q1.500-5 7.500-5t7.500 5q-3 3.500-7.500 3.500T4 19z" fill="#868483" /></svg></IconCell>
        <IconCell label="More"><Ellipsis size={17} /></IconCell>
      </div>

      <div className="flex min-h-0 flex-1">
        {/* Vertical tabs */}
        <aside className="flex w-[47px] flex-none flex-col items-center">
          <span className="h-px w-[31px] flex-none bg-[#828282]" />
          <button aria-label="Tab actions" className="flex h-10 w-9 flex-none items-center justify-center pt-2"><svg viewBox="0 0 15 15" className="size-[15px]"><rect x=".7" y=".7" width="13.600" height="13.600" rx="2" fill="none" stroke="#e8e8e8" strokeWidth="1.300" /><path d="M1 2h3v12H1z" fill="#e8e8e8" /><path d="M1 3.700h13" stroke="#e8e8e8" strokeWidth="1.200" /></svg></button>
          {sideIcons.map(([label, icon]) => <button key={label} aria-label={label} className="flex h-9 w-9 flex-none items-center justify-center">{icon}</button>)}
          <button aria-label="Google Search tab" className="my-0.5 flex h-8 w-[31px] flex-none items-center justify-center rounded bg-[#4e4e4e] shadow-md shadow-black/50"><span className="flex size-4 items-center justify-center rounded-full bg-white"><FcGoogle size={13} /></span></button>
          <button aria-label="ResearchGate" className="flex h-9 w-9 flex-none items-center justify-center"><svg viewBox="0 0 16 16" className="size-4"><rect width="16" height="16" rx="2" fill="#00ccbb" /><text x="2" y="14" fontSize="12" fontFamily={SERIF} fontWeight="700" fill="#fff">R</text><text x="10" y="7" fontSize="7" fontWeight="700" fontFamily={SANS} fill="#fff">G</text></svg></button>
          <span className="mt-[3px] h-px w-[31px] flex-none bg-[#828282]" />
          <button aria-label="New tab" className="flex h-[39px] w-9 flex-none items-center justify-center"><Plus size={19} strokeWidth={1.2} /></button>
        </aside>

        <div className="flex min-w-0 flex-1 border-t border-l border-[#6e6e6e] bg-[#202124]">
          <main className="relative min-w-0 flex-1 overflow-hidden border-r border-black">
            {/* Search header */}
            <div className="flex h-[87px] items-center pr-[11px] pl-[22px]">
              <a href="#home" className="w-[122px] font-['Lato'] text-[26px] leading-none font-bold text-[#e8eaed]">Google</a>
              <form className="flex h-[42px] w-[623px] items-center rounded-full bg-[#303134] pr-[11px] pl-[19px]" onSubmit={(e) => e.preventDefault()}>
                <input aria-label="Search" defaultValue="mse formula" className="min-w-0 flex-1 bg-transparent font-['Liberation_Sans'] text-sm text-[#e8eaed] outline-none" />
                <button type="button" aria-label="Search by image" className="flex w-10 justify-center text-[#9aa0a6]"><MdCameraAlt size={21} /></button>
                <button type="button" aria-label="Search by voice" className="flex w-10 justify-center"><Mic /></button>
                <button aria-label="Search" className="flex w-[31px] justify-center text-[#8ab4f8]"><MdSearch size={22} /></button>
              </form>
              <div className="ml-auto flex items-center">
                <button aria-label="Settings" className="flex w-11 justify-center text-[#e8eaed]"><MdOutlineSettings size={22} /></button>
                <button aria-label="Google apps" className="flex w-11 justify-center"><svg viewBox="0 0 16 16" className="size-4" fill="#e8eaed">{[2, 8, 14].map((y) => [2, 8, 14].map((x) => <circle key={`${x}-${y}`} cx={x} cy={y} r="1.700" />))}</svg></button>
                <button aria-label="Account" className="ml-[7px] flex size-7 items-center justify-center rounded-full bg-[#8d6e63] text-sm font-medium">M</button>
              </div>
            </div>
            <div className="flex h-[33px] items-start justify-between border-b border-[#3c4043] pl-[152px] text-[13px] leading-[22px] text-[#bdc1c6]">
              <nav className="flex gap-0.5 font-['Liberation_Sans']">
                {([
                  ["All", <Search size={14} strokeWidth={2} />, false], ["Images", <ImagesIcon />, true], ["Videos", <VideoIcon />, false], ["News", <NewsIcon />, false],
                  ["Shopping", <Tag size={14} strokeWidth={2} className="-scale-x-100" />, false], ["More", <Dots />, false],
                ] as [string, React.ReactNode, boolean][]).map(([t, icon, on]) => (
                  <a key={t} href={`#${t}`} className={`flex h-[33px] items-center gap-1 border-b-2 px-2.5 pb-2 ${on ? "border-[#8ab4f8] text-[#8ab4f8]" : "border-transparent"}`}>{icon}{t}</a>
                ))}
                <button className="ml-[122px] flex h-[33px] items-center pb-2.5">Tools</button>
              </nav>
              <div className="-mt-1.5 flex items-center gap-[15px] pr-[22px] text-[12px] leading-4 text-[#9aa0a6]">
                <a href="#collections" className="flex items-center gap-1.5"><MdBookmarks size={15} />Collections</a>
                <button className="flex items-center gap-1">SafeSearch on<span className="border-x-3 border-t-3 border-x-transparent border-t-[#70757a]" /></button>
              </div>
            </div>

            {/* Related searches */}
            <div className="relative mt-[15px] flex h-[43px] gap-[7px] pl-[18px]">
              {chips.map(([t, w]) => (
                <button key={t} className={`flex h-[43px] flex-none items-center overflow-hidden rounded-[9px] border border-[#5f6368] font-['Roboto'] text-[13px] font-medium text-[#bdc1c6] ${w}`}>
                  <Thumb kind={t} /><span className="flex-1 pr-[3px] text-center whitespace-nowrap">{t}</span>
                </button>
              ))}
              <button aria-label="Related search" className="flex h-[43px] w-24 flex-none overflow-hidden rounded-[9px] border border-[#5f6368]"><Thumb kind="next" /></button>
              <button aria-label="Next searches" className="absolute top-1/2 right-0 flex h-16 w-8 -translate-y-1/2 items-center justify-center rounded-l-full bg-[#303134] pl-2 text-[#bdc1c6] shadow-lg"><ChevronRight size={26} strokeWidth={2} className="flex-none" /></button>
            </div>

            {/* Results */}
            <div className="mt-[22px] pr-[17px] pl-[18px]">
              <ResultRow items={rowOne} />
              <ResultRow items={rowTwo} />
              <div className="flex h-[162px] gap-[18px] pt-px">
                <a href="#result" aria-label="Result 9" className="flex grow-[394] basis-0 items-start justify-center bg-[#1e1f22] pt-[13px]"><NextA /></a>
                <a href="#result" aria-label="Result 10" className="flex grow-[418] basis-0 items-start justify-center bg-[#1e1f22] pt-7"><NextB /></a>
                <a href="#result" aria-label="Result 11" className="flex grow-[417] basis-0 items-start justify-center bg-[#1e1f22] pt-6"><NextC /></a>
              </div>
            </div>
          </main>
          {/* Scroll bar */}
          <div className="flex w-[17px] flex-none flex-col items-center bg-[#f1f1f1]" aria-hidden="true">
            <span className="flex h-[17px] items-center"><span className="border-x-4 border-b-4 border-x-transparent border-b-[#a3a3a3]" /></span>
            <span className="h-36 w-[13px] bg-[#c1c1c1]" />
            <span className="mt-auto flex h-[17px] items-center"><span className="border-x-4 border-t-4 border-x-transparent border-t-[#505050]" /></span>
          </div>
        </div>
      </div>
    </div>
  );
}
